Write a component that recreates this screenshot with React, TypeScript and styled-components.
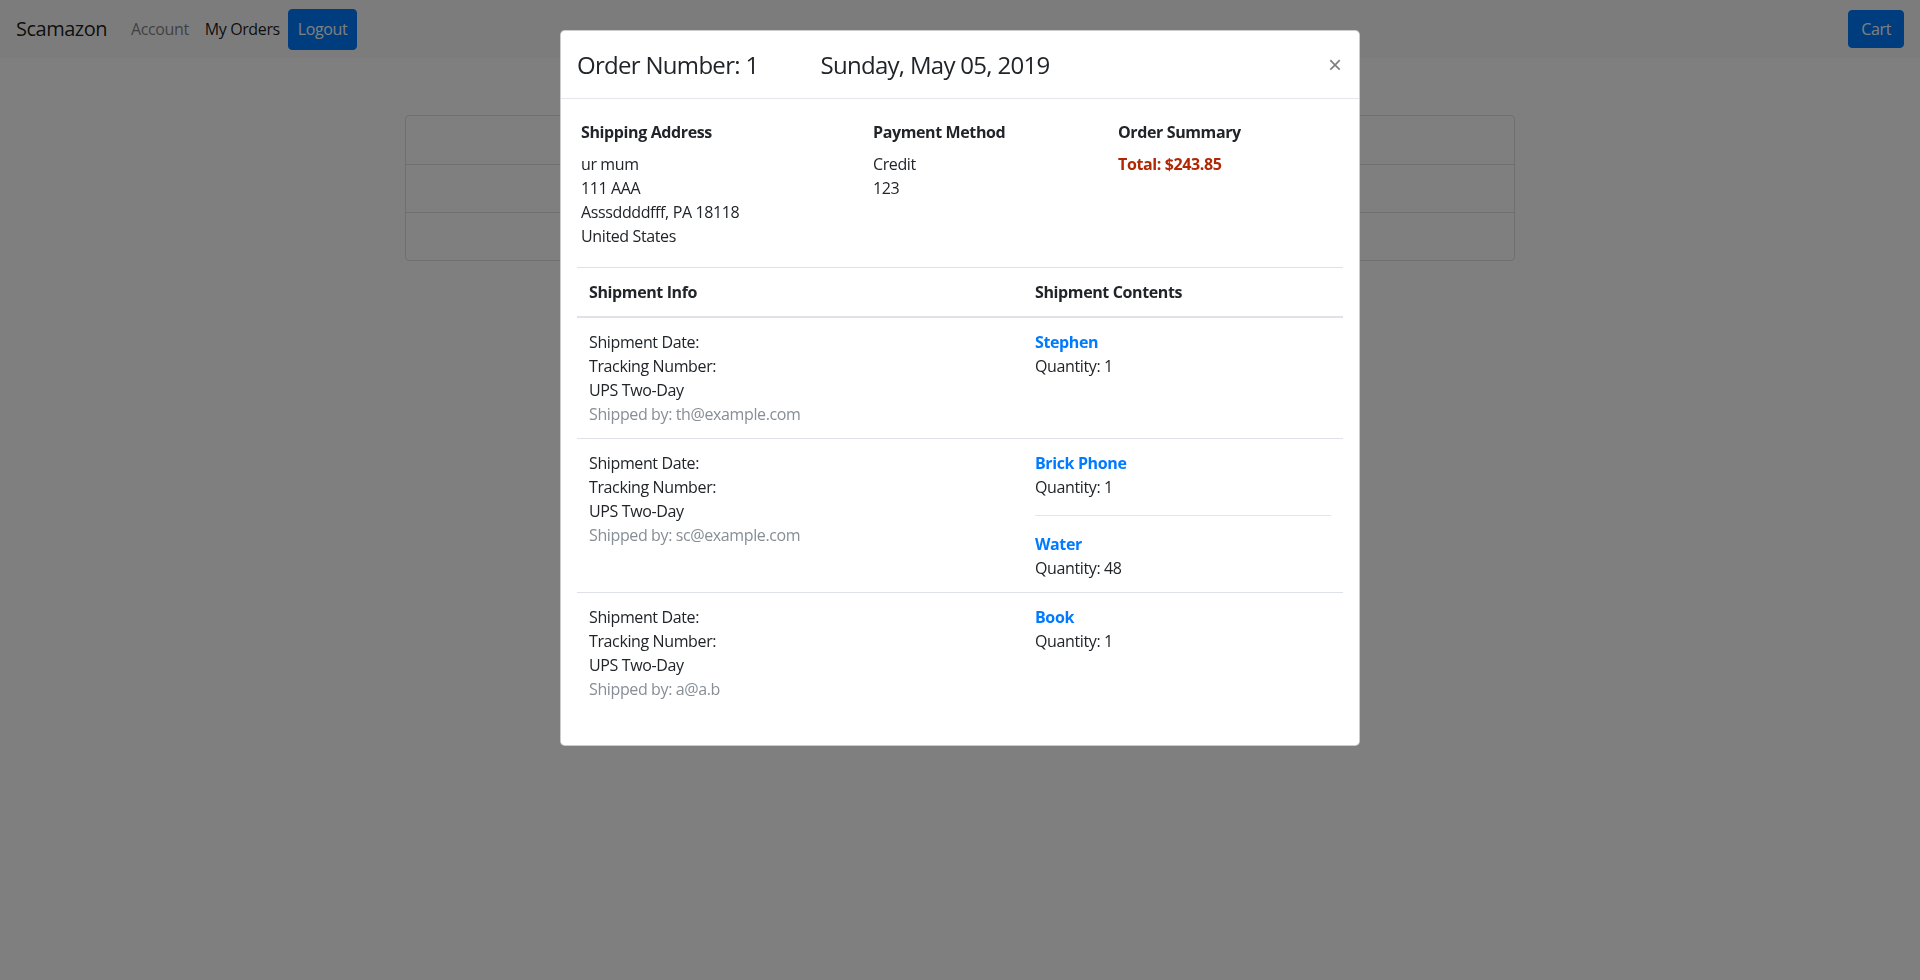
import React, { FC } from 'react'
import styled, { createGlobalStyle } from 'styled-components'

const GlobalStyle = createGlobalStyle`
	html, body {
		margin: 0;
		padding: 0;
		background: #fff;
		font-family: 'Open Sans', Roboto, 'Liberation Sans', sans-serif;
		font-size: 16px;
		line-height: 1.5;
		letter-spacing: -0.38px;
		color: #212529;
	}
	* {
		box-sizing: border-box;
	}
`

interface ShipmentItem {
	name: string
	quantity: number
}

interface Shipment {
	carrier: string
	shippedBy: string
	items: ShipmentItem[]
}

const shipments: Shipment[] = [
	{ carrier: 'UPS Two-Day', shippedBy: 'th@example.com', items: [{ name: 'Stephen', quantity: 1 }] },
	{
		carrier: 'UPS Two-Day',
		shippedBy: 'sc@example.com',
		items: [
			{ name: 'Brick Phone', quantity: 1 },
			{ name: 'Water', quantity: 48 },
		],
	},
	{ carrier: 'UPS Two-Day', shippedBy: 'a@a.b', items: [{ name: 'Book', quantity: 1 }] },
]

const Navbar = styled.nav`
	display: flex;
	align-items: center;
	height: 58px;
	padding: 0 16px;
	background: #f8f9fa;
`

const Brand = styled.a`
	font-size: 20px;
	line-height: 30px;
	letter-spacing: -0.5px;
	margin-right: 16px;
	color: rgba(0, 0, 0, 0.9);
`

const NavLink = styled.a<{ $active?: boolean }>`
	padding: 8px;
	line-height: 24px;
	color: ${(p) => (p.$active ? 'rgba(0, 0, 0, 0.9)' : 'rgba(0, 0, 0, 0.5)')};
`

const PrimaryButton = styled.button<{ $tall?: boolean }>`
	height: ${(p) => (p.$tall ? '41px' : '38px')};
	padding: 0 ${(p) => (p.$tall ? '9px' : '12px')};
	border: 1px solid #007bff;
	border-radius: 4px;
	background: #007bff;
	color: #fff;
	font-family: inherit;
	font-size: 16px;
	line-height: 24px;
	letter-spacing: -0.38px;
`

const Spacer = styled.div`
	flex: 1;
`

const Container = styled.div`
	width: 1110px;
	margin: 57px auto 0;
`

const ListGroup = styled.div`
	border: 1px solid rgba(0, 0, 0, 0.125);
	border-radius: 4px;
`

const ListItem = styled.div`
	height: 48px;
	& + & {
		border-top: 1px solid rgba(0, 0, 0, 0.125);
	}
`

const Backdrop = styled.div`
	position: fixed;
	inset: 0;
	background: rgba(0, 0, 0, 0.5);
`

const ModalWrap = styled.div`
	position: fixed;
	inset: 0;
	overflow: hidden;
`

const ModalDialog = styled.div`
	width: 800px;
	margin: 30px auto;
	background: #fff;
	border: 1px solid rgba(0, 0, 0, 0.2);
	border-radius: 5px;
`

const ModalHeader = styled.div`
	display: flex;
	align-items: center;
	padding: 16px;
	border-bottom: 1px solid #e3e6ea;
`

const ModalTitle = styled.h4`
	margin: 0;
	font-size: 24px;
	font-weight: 500;
	line-height: 35px;
	letter-spacing: -0.7px;
	color: #212529;
`

const TitleDate = styled.span`
	margin-left: 62px;
`

const CloseButton = styled.button`
	margin-left: auto;
	padding: 0 1px;
	border: 0;
	background: transparent;
	font-family: 'Liberation Sans', Arial, sans-serif;
	font-size: 24px;
	font-weight: 400;
	line-height: 1;
	color: #000;
	opacity: 0.5;
	text-shadow: 0 1px 0 #fff;
`

const ModalBody = styled.div`
	padding: 16px 16px 32px;
`

const InfoGrid = styled.div`
	display: grid;
	grid-template-columns: 292px 245px 1fr;
	padding: 5px 0 0 4px;
	margin-bottom: 19px;
`

const SectionTitle = styled.h6`
	margin: 0 0 8px;
	font-size: 16px;
	font-weight: 700;
	line-height: 24px;
`

const Line = styled.div`
	line-height: 24px;
`

const Total = styled.div`
	font-weight: 700;
	line-height: 24px;
	color: #b12704;
`

const Table = styled.div`
	border-top: 1px solid #dee2e6;
`

const Row = styled.div<{ $head?: boolean }>`
	display: grid;
	grid-template-columns: 446px 1fr;
	border-bottom: ${(p) => (p.$head ? '2px solid #dee2e6' : '1px solid #dee2e6')};
	&:last-child {
		border-bottom: 0;
	}
`

const Cell = styled.div`
	padding: 12px;
	line-height: 24px;
`

const HeadCell = styled(Cell)`
	font-weight: 700;
`

const Muted = styled.div`
	color: #868e96;
`

const ItemName = styled.a`
	display: block;
	font-weight: 700;
	color: #007bff;
`

const ItemRule = styled.hr`
	margin: 16px 0;
	border: 0;
	border-top: 1px solid rgba(0, 0, 0, 0.1);
`

const ShipmentRow: FC<{ shipment: Shipment }> = ({ shipment }) => (
	<Row>
		<Cell>
			<Line>Shipment Date:</Line>
			<Line>Tracking Number:</Line>
			<Line>{shipment.carrier}</Line>
			<Muted>Shipped by: {shipment.shippedBy}</Muted>
		</Cell>
		<Cell>
			{shipment.items.map((item, i) => (
				<React.Fragment key={item.name}>
					{i > 0 && <ItemRule />}
					<ItemName>{item.name}</ItemName>
					<Line>Quantity: {item.quantity}</Line>
				</React.Fragment>
			))}
		</Cell>
	</Row>
)

const App: FC = () => {
	return (
		<>
			<GlobalStyle />
			<Navbar>
				<Brand>Scamazon</Brand>
				<NavLink>Account</NavLink>
				<NavLink $active>My Orders</NavLink>
				<PrimaryButton $tall>Logout</PrimaryButton>
				<Spacer />
				<PrimaryButton>Cart</PrimaryButton>
			</Navbar>
			<Container>
				<ListGroup>
					<ListItem />
					<ListItem />
					<ListItem />
				</ListGroup>
			</Container>

			<Backdrop />
			<ModalWrap>
				<ModalDialog>
					<ModalHeader>
						<ModalTitle>
							Order Number: 1<TitleDate>Sunday, May 05, 2019</TitleDate>
						</ModalTitle>
						<CloseButton>×</CloseButton>
					</ModalHeader>
					<ModalBody>
						<InfoGrid>
							<div>
								<SectionTitle>Shipping Address</SectionTitle>
								<Line>ur mum</Line>
								<Line>111 AAA</Line>
								<Line>Asssddddfff, PA 18118</Line>
								<Line>United States</Line>
							</div>
							<div>
								<SectionTitle>Payment Method</SectionTitle>
								<Line>Credit</Line>
								<Line>123</Line>
							</div>
							<div>
								<SectionTitle>Order Summary</SectionTitle>
								<Total>Total: $243.85</Total>
							</div>
						</InfoGrid>
						<Table>
							<Row $head>
								<HeadCell>Shipment Info</HeadCell>
								<HeadCell>Shipment Contents</HeadCell>
							</Row>
							{shipments.map((s, i) => (
								<ShipmentRow key={i} shipment={s} />
							))}
						</Table>
					</ModalBody>
				</ModalDialog>
			</ModalWrap>
		</>
	)
}

export default App
